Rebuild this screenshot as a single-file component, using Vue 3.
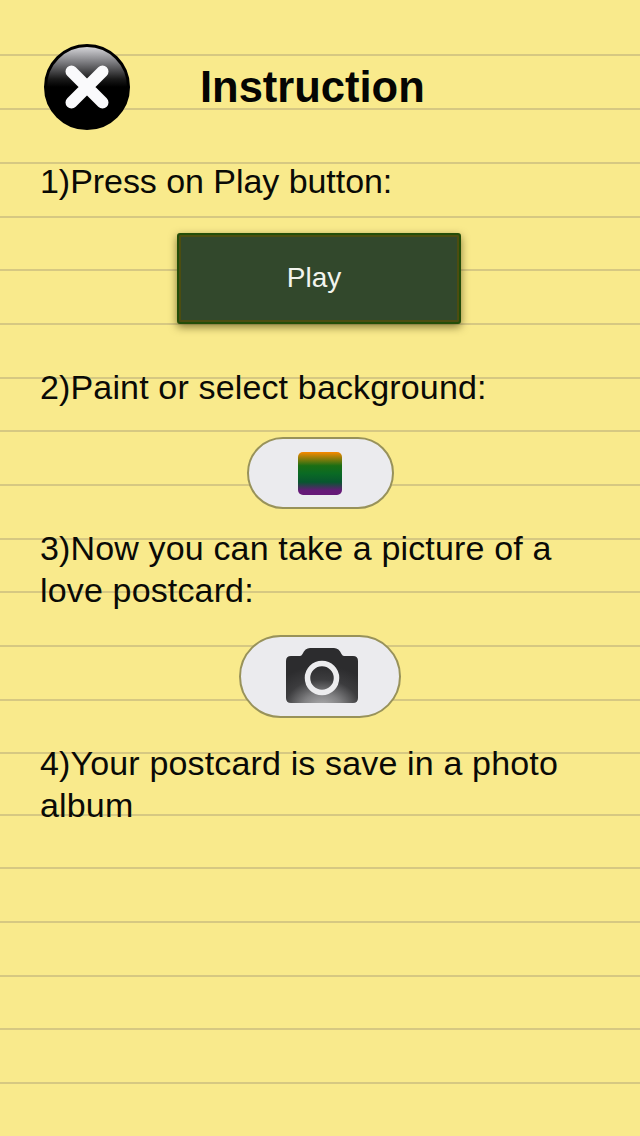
<script setup>
const lines = [54, 108, 162, 216, 269, 323, 377, 430, 484, 538, 591, 645, 699, 752, 814, 867, 921, 975, 1028, 1082]
</script>

<template>
  <div class="page">
    <div class="rules">
      <i v-for="y in lines" :key="y" class="rule" :style="{ top: y + 'px' }"></i>
    </div>

    <header class="head">
      <button class="close">
        <svg width="44" height="44" viewBox="0 0 44 44">
          <path d="M6.500 6.500 L37.500 37.500 M37.500 6.500 L6.500 37.500" stroke="#fafafc" stroke-width="12" stroke-linecap="round" />
        </svg>
      </button>
      <h1>Instruction</h1>
    </header>

    <p class="step first">1)Press on Play button:</p>
    <div class="row play-row"><button class="play">Play</button></div>

    <p class="step second">2)Paint or select background:</p>
    <div class="row pill-row"><button class="pill small"><span class="swatch"></span></button></div>

    <p class="step third">3)Now you can take a picture of a love postcard:</p>
    <div class="row cam-row">
      <button class="pill big">
        <svg width="72" height="55" viewBox="0 0 72 55">
          <defs>
            <radialGradient id="camFill" cx="0.5" cy="1.1" r="0.78" fx="0.5" fy="1.1">
              <stop offset="0" stop-color="#b4b4b6" />
              <stop offset="0.35" stop-color="#818183" />
              <stop offset="0.68" stop-color="#3c3c3e" />
              <stop offset="1" stop-color="#2c2c2e" />
            </radialGradient>
          </defs>
          <path d="M5 8 H14 Q15.500 8 16.500 6 Q19 0 24 0 H48 Q53 0 55.500 6 Q56.500 8 58 8 H67 Q72 8 72 13 V50 Q72 55 67 55 H5 Q0 55 0 50 V13 Q0 8 5 8 Z" fill="url(#camFill)" />
          <circle cx="36" cy="30" r="14.500" fill="none" stroke="#ececee" stroke-width="5.500" />
        </svg>
      </button>
    </div>

    <p class="step fourth">4)Your postcard is save in a photo album</p>
  </div>
</template>

<style scoped>
.page {
  position: relative;
  width: 640px;
  height: 1136px;
  overflow: hidden;
  background: #f9ea8c;
  font-family: "Liberation Sans", Arial, sans-serif;
  color: #0a0a06;
}

.rules {
  position: absolute;
  inset: 0;
}

.rule {
  position: absolute;
  left: 0;
  right: 0;
  height: 2px;
  background: #d6c882;
}

.head {
  position: relative;
  display: flex;
  align-items: center;
  height: 86px;
  padding: 44px 0 0 44px;
}

.close {
  display: flex;
  align-items: center;
  justify-content: center;
  flex: none;
  width: 86px;
  height: 86px;
  padding: 0;
  border: 3px solid #000;
  border-radius: 50%;
  background: linear-gradient(#d4d4d8 0%, #77777b 20%, #1a1a1a 40%, #000 50%);
}

h1 {
  margin: 0 0 0 70px;
  font-size: 43.5px;
  line-height: 48px;
  font-weight: 700;
  color: #050503;
}

.step {
  position: relative;
  margin: 0;
  padding: 0 60px 0 40px;
  font-size: 34px;
  line-height: 42px;
  letter-spacing: 0.15px;
}

.first {
  margin-top: 30px;
  letter-spacing: -0.05px;
}

.row {
  position: relative;
  display: flex;
}

.play-row {
  margin-top: 31px;
  padding-left: 177px;
}

.play {
  width: 284px;
  height: 91px;
  padding: 0 10px 2px 0;
  border: 2px solid #234d08;
  border-radius: 3px;
  background: #32482c;
  box-shadow: inset 0 0 0 2px #4c4d10, 0 3px 9px rgba(60, 50, 0, 0.6);
  color: #f2f4ee;
  font-family: inherit;
  font-size: 28px;
}

.second {
  margin-top: 42px;
}

.pill-row {
  margin-top: 29px;
  padding-left: 247px;
}

.pill {
  display: flex;
  align-items: center;
  justify-content: center;
  padding: 0;
  border: 2.5px solid #98925a;
  border-radius: 999px;
  background: #ebebee;
}

.small {
  width: 147px;
  height: 72px;
  padding-right: 1px;
}

.swatch {
  width: 44px;
  height: 43px;
  border-radius: 5px;
  background: linear-gradient(#f88a00 0%, #1a6e14 32%, #0a6a24 50%, #07562f 70%, #661a78 90%);
}

.third {
  margin-top: 18px;
}

.cam-row {
  margin-top: 24px;
  padding-left: 239px;
}

.big {
  width: 162px;
  height: 83px;
  padding: 0 0 2px 4px;
}

.fourth {
  margin-top: 24px;
}
</style>
